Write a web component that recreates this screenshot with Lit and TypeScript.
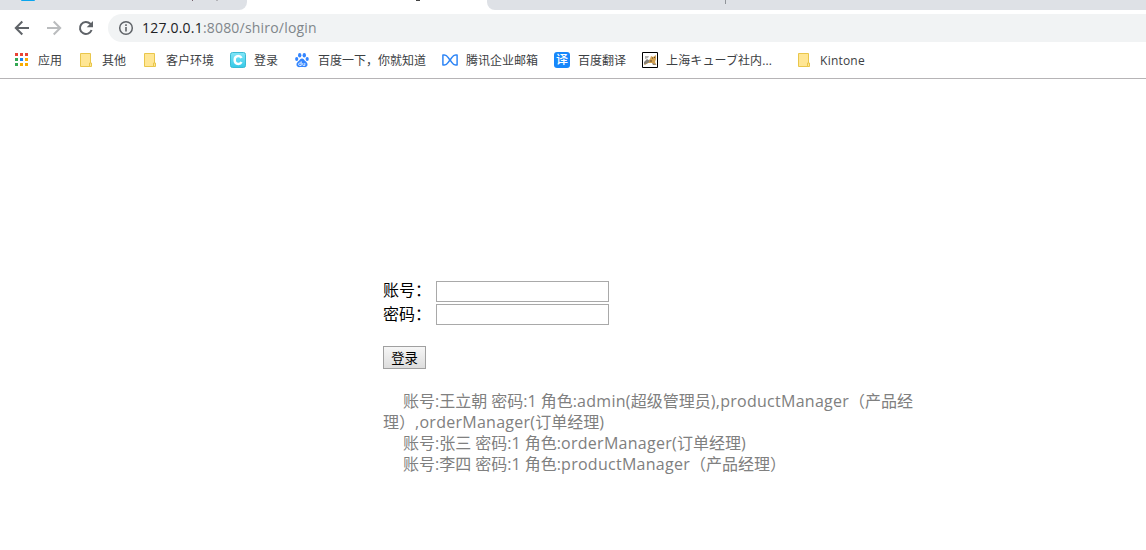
import { LitElement, html, css, svg, TemplateResult } from "lit";
import { customElement } from "lit/decorators.js";

const folder = svg`<svg class="ico" viewBox="0 0 16 16">
  <path d="M2.500 1.500h10v13h-10z" fill="#ffe694" stroke="#e9c64b"/>
  <path d="M11.500 14.500v-3.500h2v3.500z" fill="#ffe694" stroke="#e9c64b"/>
</svg>`;

const apps = svg`<svg class="ico" viewBox="0 0 16 16" shape-rendering="crispEdges">
  <path fill="#ea4335" d="M1 1h3v3H1zM6 1h3v3H6zM11 1h3v3H11z"/>
  <path fill="#34a853" d="M1 6h3v3H1zM1 11h3v3H1z"/>
  <path fill="#1a84f0" d="M6 6h3v3H6z"/>
  <path fill="#f9ab00" d="M11 6h3v3H11zM6 11h3v3H6zM11 11h3v3H11z"/>
</svg>`;

const cube = svg`<svg class="ico" viewBox="0 0 16 16">
  <defs><linearGradient id="aqua" x1="0" y1="0" x2="0" y2="1">
    <stop offset="0" stop-color="#82e6f8"/><stop offset="1" stop-color="#35c9e8"/>
  </linearGradient></defs>
  <rect x=".5" y=".5" width="15" height="15" rx="2" fill="url(#aqua)" stroke="#3abbd3"/>
  <path d="M11.500 6C10.800 4.500 9.700 4.100 8.300 4.100 5.900 4.100 4.700 5.700 4.700 8s1.200 3.900 3.600 3.900c1.400 0 2.500-.4 3.200-1.900" fill="none" stroke="#fff" stroke-width="2.500"/>
</svg>`;

const paw = svg`<svg class="ico" viewBox="0 0 16 16" fill="#3385ff">
  <ellipse cx="5.700" cy="3.200" rx="1.700" ry="2.200"/><ellipse cx="10.300" cy="3.200" rx="1.700" ry="2.200"/>
  <ellipse cx="2.700" cy="6.900" rx="1.600" ry="2"/><ellipse cx="13.200" cy="6.900" rx="1.600" ry="2"/>
  <path d="M8 6.600c1.500 0 2.200 1.400 3.300 2.500 1.200 1.200 2.500 2.100 2.200 3.900-.3 1.700-1.800 2.400-3.400 2.100-1.500-.3-2.700-.3-4.200 0-1.600.3-3.100-.4-3.400-2.100-.3-1.800 1-2.700 2.200-3.900C5.800 8 6.500 6.600 8 6.600z"/>
  <path d="M7.200 9.300v4.200H5.800a1.200 1.200 0 0 1 0-2.500h1.400M8.800 11v1.900q0 .6.600.6h1.400V11" fill="none" stroke="#fff" stroke-width=".8"/>
</svg>`;

const mail = svg`<svg class="ico" viewBox="0 0 16 16" fill="none" stroke="#2f86f6" stroke-width="1.500" stroke-linejoin="round">
  <path d="M.9 3v10h1.500c3 0 3.300-2.600 5.600-5C5.700 5.600 5.400 3 2.400 3zM15.100 3v10h-1.500c-3 0-3.300-2.600-5.600-5 2.300-2.400 2.600-5 5.600-5z"/>
</svg>`;

const translate = html`<span class="ico yi">译</span>`;

const cat = svg`<svg class="ico" viewBox="0 0 16 16">
  <path d="M.5.5h15v15H.5z" fill="#fff" stroke="#000"/>
  <path d="M3 4l4 0-1 2-3 1z" fill="#b5b3ae"/>
  <path d="M2 12l3-2 3-3 1-3 2 1 3-2v4l-1 3 1.500 3h-2l-2.500-2-4 0-3 2z" fill="#d3a14f"/>
  <path d="M2 10l3-3 3 2-2 2-4 1.500zM10 11l3 1 1 1h-3z" fill="#85817a"/>
  <path d="M10 6h1M12 5.500h1M8 9h2" stroke="#604627"/>
</svg>`;

interface Bookmark { icon: TemplateResult; label: string; cls?: string }

const bookmarks: Bookmark[] = [
  { icon: apps, label: "应用" },
  { icon: folder, label: "其他" },
  { icon: folder, label: "客户环境" },
  { icon: cube, label: "登录" },
  { icon: paw, label: "百度一下，你就知道" },
  { icon: mail, label: "腾讯企业邮箱" },
  { icon: translate, label: "百度翻译" },
  { icon: cat, label: "上海キューブ社内...", cls: "wide" },
  { icon: folder, label: "Kintone", cls: "latin" },
];

@customElement("browser-chrome")
export class BrowserChrome extends LitElement {
  static styles = css`
    :host { display: block; background: #fff; font-family: "Open Sans", "Noto Sans CJK SC", sans-serif; }
    .tabs { display: flex; height: 10px; background: #fff; overflow: hidden; }
    .tab { background: #dee1e6; height: 10px; box-sizing: border-box; }
    .left { width: 247px; border-bottom-right-radius: 8px; padding-left: 21px; }
    .gap { width: 240px; }
    .right { flex: 1; border-bottom-left-radius: 8px; padding-left: 238px; }
    .marks { display: block; }
    .bar { display: flex; align-items: center; height: 28px; padding: 4px 0 0 14px; }
    .nav { width: 16px; height: 16px; margin-right: 16px; flex: none; }
    .reload { margin-right: 14px; }
    .address { flex: 1; display: flex; align-items: center; height: 28px; box-sizing: border-box;
      background: #f1f3f4; border-radius: 14px 0 0 14px; padding-left: 10px; }
    .info { width: 16px; height: 16px; margin-right: 8px; }
    .url { font-size: 14px; line-height: 20px; color: #80868b; letter-spacing: 0.2px; white-space: nowrap; }
    .host { color: #202124; }
    .bookmarks { display: flex; align-items: center; gap: 16px; height: 36px; padding-left: 14px;
      border-bottom: 1px solid #b6b4b6; }
    .item { display: flex; align-items: center; gap: 8px; height: 16px; }
    .ico { width: 16px; height: 16px; flex: none; display: block; }
    .label { font-size: 12px; line-height: 16px; padding-top: 2px; color: #3c4043; white-space: nowrap; }
    .wide { width: 114px; letter-spacing: 0.1px; }
    .latin { letter-spacing: 0.2px; }
    .yi { background: #1687fb; border-radius: 3px; color: #fff; font-size: 12px; font-weight: 500;
      line-height: 15px; text-align: center; }
  `;

  render() {
    return html`
      <div class="tabs">
        <div class="tab left">
          <svg class="marks" width="226" height="4">
            <rect x="0" y="-3" width="14" height="4" rx="1" fill="#0aa5ee"/>
            <path d="M171.500 0v1" stroke="#77616b"/><path d="M195 .5h2" stroke="#b3b3b8"/>
          </svg>
        </div>
        <div class="gap">
          <svg class="marks" width="240" height="3"><path d="M169 .5h4" stroke="#444"/></svg>
        </div>
        <div class="tab right">
          <svg class="marks" width="2" height="4"><path d="M.5 0v4" stroke="#909499"/></svg>
        </div>
      </div>
      <div class="bar">
        <svg class="nav" viewBox="0 0 16 16" fill="none" stroke="#5f6368" stroke-width="2">
          <path d="M15 8H2.500M8.300 1.500L1.800 8l6.500 6.500"/>
        </svg>
        <svg class="nav" viewBox="0 0 16 16" fill="none" stroke="#babcbe" stroke-width="2">
          <path d="M1 8h12.500M7.700 1.500L14.200 8l-6.500 6.500"/>
        </svg>
        <svg class="nav reload" viewBox="0 0 16 16">
          <path d="M13.600 10A6 6 0 1 1 12.300 3.800L14 5.500" fill="none" stroke="#5f6368" stroke-width="2"/>
          <path d="M15 1v6.300H8.700z" fill="#5f6368"/>
        </svg>
        <div class="address">
          <svg class="info" viewBox="0 0 16 16">
            <circle cx="8" cy="8" r="6.300" fill="none" stroke="#5f6368" stroke-width="1.500"/>
            <path d="M7.200 7h1.600v4.500H7.200zM7.200 4.300h1.600v1.600H7.200z" fill="#5f6368"/>
          </svg>
          <div class="url"><span class="host">127.0.0.1</span>:8080/shiro/login</div>
        </div>
      </div>
      <div class="bookmarks">
        ${bookmarks.map((b) => html`<div class="item">${b.icon}<span class="label ${b.cls ?? ""}">${b.label}</span></div>`)}
      </div>
    `;
  }
}

@customElement("login-page")
export class LoginPage extends LitElement {
  static styles = css`
    :host { display: block; padding: 201px 0 0 383px; font: 16px/21px "Open Sans", "Noto Sans CJK SC", sans-serif; color: #000; }
    .row { display: flex; align-items: center; height: 23px; }
    .name { width: 53px; line-height: 21px; white-space: nowrap; }
    .first { padding-bottom: 2px; }
    .field { box-sizing: border-box; width: 173px; height: 21px; border: 1px solid #a9a9a9; background: #fff;
      padding: 1px; margin: 0; outline: none; border-radius: 0; }
    .submit { display: block; box-sizing: border-box; width: 43px; height: 23px; margin: 20px 0 0; padding: 0 0 1px;
      border: 1px solid #a0a0a0; border-radius: 0; background: linear-gradient(#f6f6f6, #dddddd);
      font: 13.333px/19px "Noto Sans CJK SC", sans-serif; color: #000; }
    .notes { margin-top: 22px; width: 540px; color: #808080; }
    .note { white-space: pre; height: 21px; }
    .indent { padding-left: 20px; }
    .l { letter-spacing: 0.27px; }
  `;

  render() {
    return html`
      <div class="row"><label class="name first">账号：</label><input class="field" type="text"></div>
      <div class="row"><label class="name">密码：</label><input class="field" type="password"></div>
      <button class="submit">登录</button>
      <div class="notes">
        <div class="note indent">账号:王立朝 密码:1 角色:<span class="l">admin(</span>超级管理员<span class="l">),productManager</span>（产品经</div>
        <div class="note">理）<span class="l">,orderManager(</span>订单经理)</div>
        <div class="note indent">账号:张三 密码:1 角色:<span class="l">orderManager(</span>订单经理)</div>
        <div class="note indent">账号:李四 密码:1 角色:<span class="l">productManager</span>（产品经理）</div>
      </div>
    `;
  }
}

@customElement("app-root")
export class AppRoot extends LitElement {
  static styles = css`
    :host { display: block; height: 550px; background: #fff; overflow: hidden; }
  `;

  render() {
    return html`<browser-chrome></browser-chrome><login-page></login-page>`;
  }
}
